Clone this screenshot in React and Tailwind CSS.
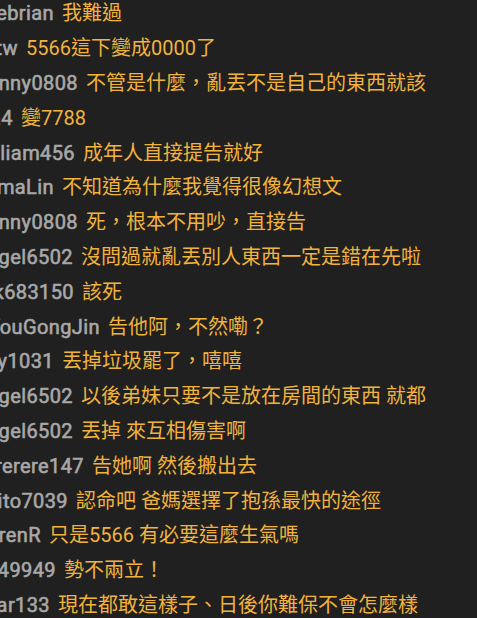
const ROWS = [
  { name: "Zebrian", w: "w-[62px]", text: "我難過" },
  { name: "Jtw", w: "w-[26px]", text: "5566這下變成0000了" },
  { name: "Jenny0808", w: "w-[86px]", text: "不管是什麼，亂丟不是自己的東西就該" },
  { name: "Hana4", w: "w-[21px]", text: "變7788" },
  { name: "William456", w: "w-[83px]", text: "成年人直接提告就好" },
  { name: "EmmaLin", w: "w-[62px]", text: "不知道為什麼我覺得很像幻想文" },
  { name: "Jenny0808", w: "w-[86px]", text: "死，根本不用吵，直接告" },
  { name: "Angel6502", w: "w-[81px]", text: "沒問過就亂丟別人東西一定是錯在先啦" },
  { name: "Nick683150", w: "w-[82px]", text: "該死" },
  { name: "YouGongJin", w: "w-[108px]", text: "告他阿，不然嘞？" },
  { name: "Andy1031", w: "w-[62px]", text: "丟掉垃圾罷了，嘻嘻" },
  { name: "Angel6502", w: "w-[81px]", text: "以後弟妹只要不是放在房間的東西 就都" },
  { name: "Angel6502", w: "w-[81px]", text: "丟掉 來互相傷害啊" },
  { name: "Wererere147", w: "w-[92px]", text: "告她啊 然後搬出去" },
  { name: "Dito7039", w: "w-[76px]", text: "認命吧 爸媽選擇了抱孫最快的途徑" },
  { name: "KarenR", w: "w-[49px]", text: "只是5566 有必要這麼生氣嗎" },
  { name: "849949", w: "w-[64px]", text: "勢不兩立！" },
  { name: "Star133", w: "w-[58px]", text: "現在都敢這樣子、日後你難保不會怎麼樣" },
];

function ChatRow({ row }) {
  return (
    <div className="flex items-center h-[34.8px] whitespace-nowrap">
      {/* name column, clipped on the left like the cropped chat */}
      <div className={`${row.w} shrink-0 flex justify-end overflow-hidden`}>
        <span className="pr-[8px] tracking-[0.4px] text-[#a8a8a8] [-webkit-text-stroke:0.6px_#a8a8a8]">{row.name}</span>
      </div>
      <span className="text-[#f2b33d]">{row.text}</span>
    </div>
  );
}

export default function App() {
  return (
    <div className="w-[477px] h-[618px] overflow-hidden bg-[#202020] text-[20px] leading-[24px] font-[Roboto,'Noto_Sans_CJK_TC',sans-serif]">
      <div className="-mt-[4px]">
        {ROWS.map((row, i) => (
          <ChatRow key={i} row={row} />
        ))}
      </div>
    </div>
  );
}
